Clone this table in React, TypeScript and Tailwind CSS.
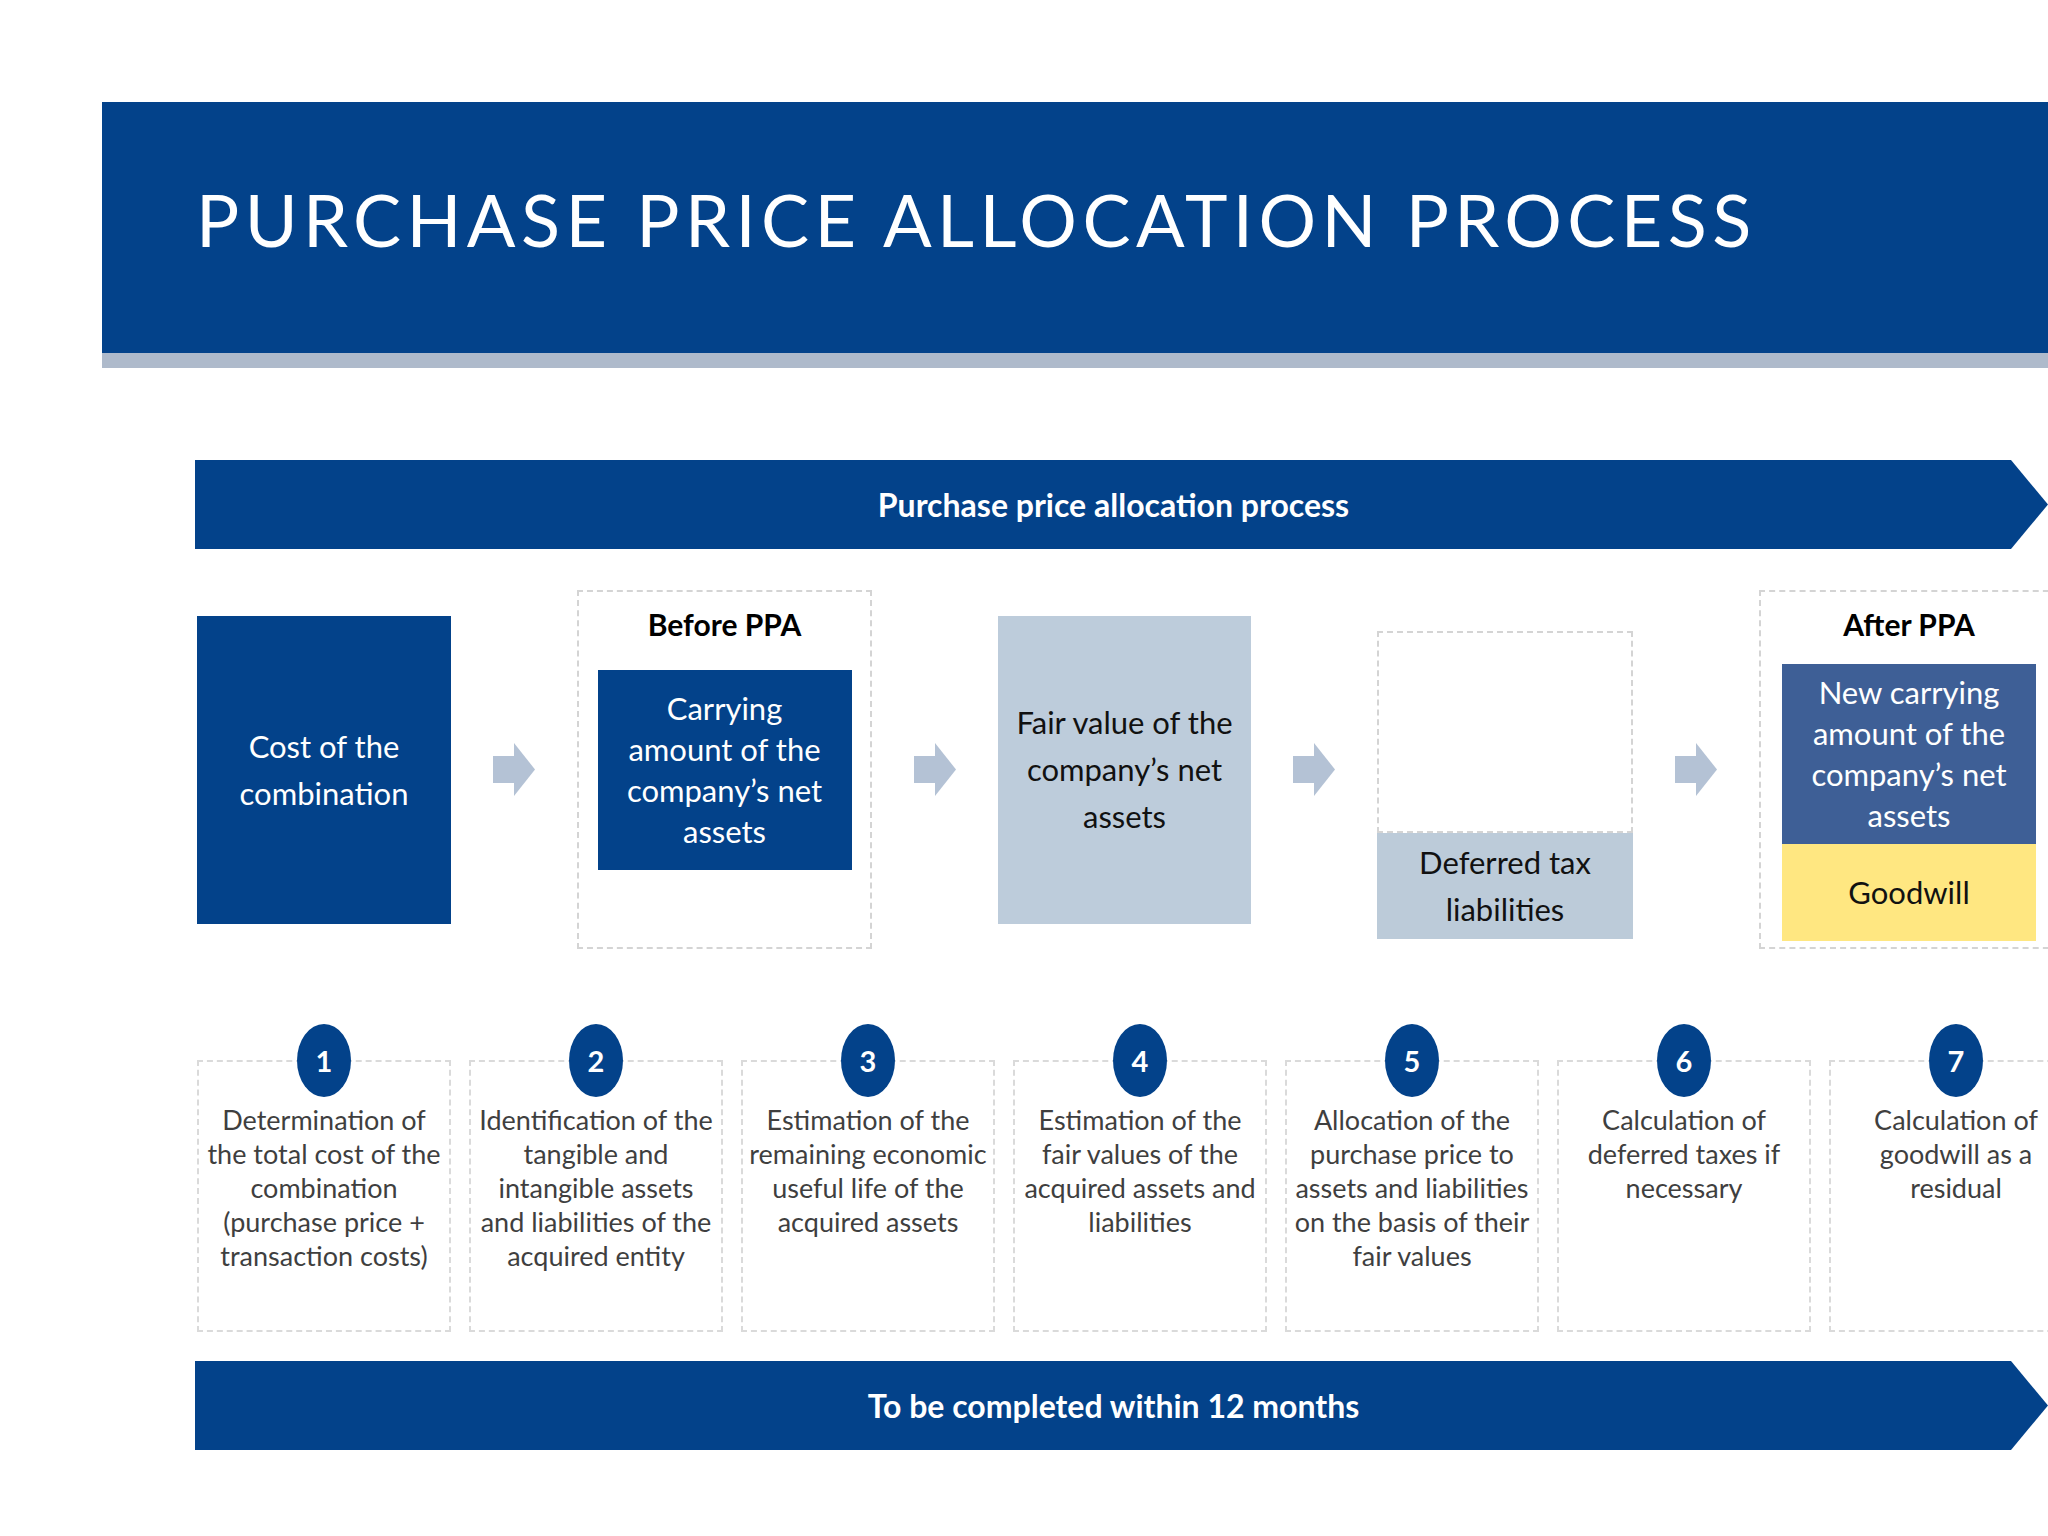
const BLUE = 'bg-[#03428a]'

const steps: { n: number; lines: string[] }[] = [
  { n: 1, lines: ['Determination of', 'the total cost of the', 'combination', '(purchase price +', 'transaction costs)'] },
  { n: 2, lines: ['Identification of the', 'tangible and', 'intangible assets', 'and liabilities of the', 'acquired entity'] },
  { n: 3, lines: ['Estimation of the', 'remaining economic', 'useful life of the', 'acquired assets'] },
  { n: 4, lines: ['Estimation of the', 'fair values of the', 'acquired assets and', 'liabilities'] },
  { n: 5, lines: ['Allocation of the', 'purchase price to', 'assets and liabilities', 'on the basis of their', 'fair values'] },
  { n: 6, lines: ['Calculation of', 'deferred taxes if', 'necessary'] },
  { n: 7, lines: ['Calculation of', 'goodwill as a', 'residual'] },
]

function Lines({ lines }: { lines: string[] }) {
  return (
    <>
      {lines.map((l) => (
        <div key={l} className="whitespace-nowrap">
          {l}
        </div>
      ))}
    </>
  )
}

function Arrow() {
  return (
    <svg width="42" height="53" viewBox="0 0 42 53" className="shrink-0">
      <rect x="0" y="13" width="22" height="27" fill="#b4c2d5" />
      <polygon points="21,0 42,26.5 21,53" fill="#b4c2d5" />
    </svg>
  )
}

function Banner({ children }: { children: React.ReactNode }) {
  return (
    <div
      className={`${BLUE} h-[89px] w-full flex items-center justify-center pr-[16px] text-white font-bold text-[32px] [clip-path:polygon(0_0,calc(100%-37px)_0,100%_50%,calc(100%-37px)_100%,0_100%)]`}
    >
      {children}
    </div>
  )
}

export default function App() {
  return (
    <div className="w-[2048px] h-[1536px] bg-white overflow-hidden font-['Lato',sans-serif]">
      {/* header */}
      <div className="pt-[102px] pl-[102px]">
        <div className={`${BLUE} h-[251px] pl-[94px] pt-[81px]`}>
          <h1 className="text-white text-[72px] leading-none font-normal tracking-[0.075em] whitespace-nowrap">
            PURCHASE PRICE ALLOCATION PROCESS
          </h1>
        </div>
        <div className="h-[15px] bg-[#aebacb]" />
      </div>

      <div className="pl-[195px]">
        <div className="mt-[92px]">
          <Banner>Purchase price allocation process</Banner>
        </div>

        {/* balance sheet row */}
        <div className="mt-[41px] h-[359px] pl-[2px] flex items-center gap-[42px] text-[31px]">
          <div className={`${BLUE} w-[254px] h-[308px] shrink-0 flex flex-col items-center justify-center text-white leading-[47px]`}>
            <Lines lines={['Cost of the', 'combination']} />
          </div>
          <Arrow />
          <div className="w-[295px] h-[359px] shrink-0 border-2 border-dashed border-[#d4d4d4] flex flex-col items-center">
            <div className="pt-[15px] h-[78px] text-[30px] leading-[34px] font-bold text-black">Before PPA</div>
            <div className={`${BLUE} w-[254px] h-[200px] flex flex-col items-center justify-center text-white leading-[41px]`}>
              <Lines lines={['Carrying', 'amount of the', 'company\u2019s net', 'assets']} />
            </div>
          </div>
          <Arrow />
          <div className="w-[253px] h-[308px] shrink-0 bg-[#bdccdb] flex flex-col items-center justify-center text-[#111] leading-[47px]">
            <Lines lines={['Fair value of the', 'company\u2019s net', 'assets']} />
          </div>
          <Arrow />
          <div className="w-[256px] shrink-0 self-start mt-[41px] flex flex-col">
            <div className="h-[202px] border-2 border-dashed border-[#d4d4d4]" />
            <div className="h-[106px] bg-[#bccbd9] flex flex-col items-center justify-center text-[#111] leading-[47px]">
              <Lines lines={['Deferred tax', 'liabilities']} />
            </div>
          </div>
          <Arrow />
          <div className="w-[300px] h-[359px] shrink-0 border-2 border-dashed border-[#d4d4d4] pl-[21px] flex flex-col">
            <div className="pt-[15px] h-[72px] w-[254px] text-center text-[30px] leading-[34px] font-bold text-black">After PPA</div>
            <div className="w-[254px] h-[180px] bg-[#3e5f96] flex flex-col items-center justify-center text-white leading-[41px]">
              <Lines lines={['New carrying', 'amount of the', 'company\u2019s net', 'assets']} />
            </div>
            <div className="w-[254px] h-[97px] bg-[#ffe781] flex items-center justify-center text-[#111]">Goodwill</div>
          </div>
        </div>

        {/* steps */}
        <div className="mt-[111px] pl-[2px] flex gap-[18px]">
          {steps.map((s) => (
            <div
              key={s.n}
              className="relative w-[254px] h-[272px] shrink-0 border-2 border-dashed border-[#dadada] pt-[41px] flex flex-col items-center text-[27px] leading-[34px] text-[#3f3f3f]"
            >
              <div className={`${BLUE} absolute left-1/2 -translate-x-1/2 -top-[38px] w-[54px] h-[73px] rounded-[50%] flex items-center justify-center text-white font-bold text-[29px]`}>
                {s.n}
              </div>
              <Lines lines={s.lines} />
            </div>
          ))}
        </div>

        <div className="mt-[29px]">
          <Banner>To be completed within 12 months</Banner>
        </div>
      </div>
    </div>
  )
}
